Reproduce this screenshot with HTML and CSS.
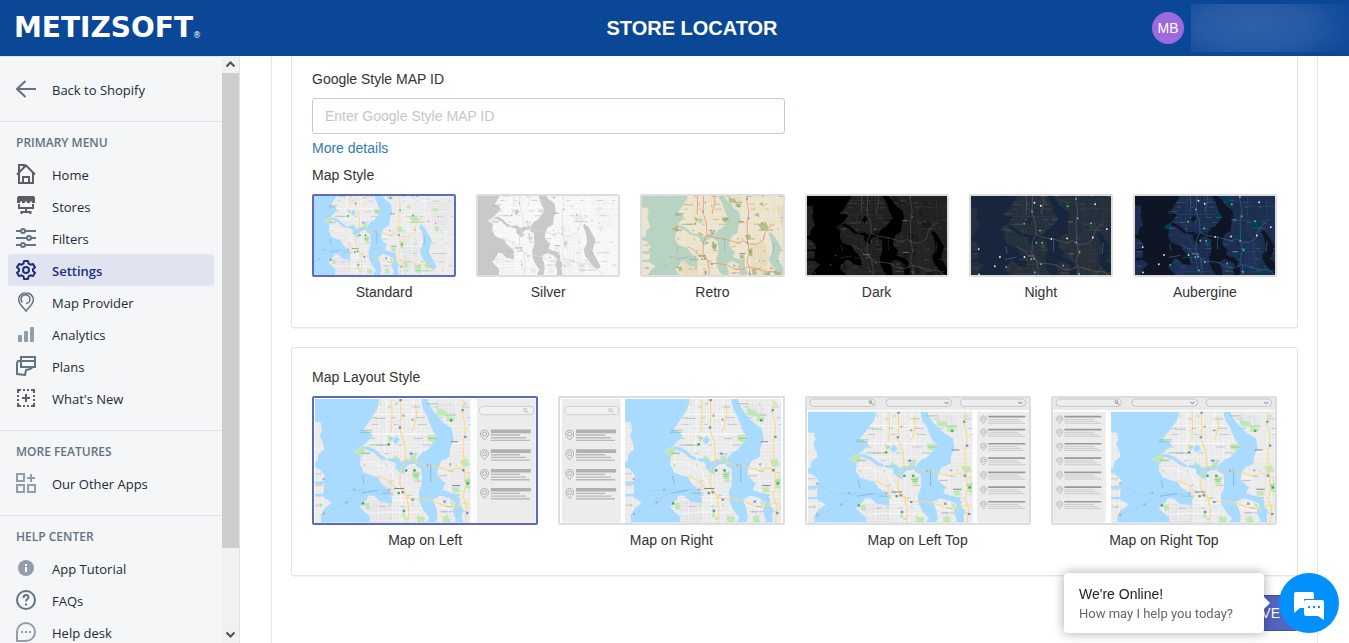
FILE: index.html
```
<!DOCTYPE html>
<html lang="en">
<head>
<meta charset="utf-8">
<meta name="viewport" content="width=device-width, initial-scale=1">
<title>Store Locator</title>
<link rel="stylesheet" href="styles.css">
</head>
<body>
<svg class="defs" aria-hidden="true">
  <defs>
    <clipPath id="land-clip">
      <path id="land" d="M20 110 62 112 66 135 60 150 68 175 72 192 55 208 52 230 20 235ZM20 238 58 252 75 272 73 288 20 292ZM20 296 72 298 70 325 20 328ZM20 335 70 335 95 352 72 372 62 390 64 411 20 411ZM240 30 236 60 225 82 208 108 190 135 206 140 218 152 192 180 160 200 183 212 180 238 192 262 218 272 234 276 244 296 268 314 274 330 277 356 262 354 240 350 224 334 208 330 196 348 180 365 192 378 210 395 208 440 385 440 378 411 388 398 370 376 358 350 356 322 366 292 363 250 346 242 350 222 366 202 380 196 398 176 410 156 398 138 388 112 380 90 370 75 364 50 366 30ZM383 30 385 52 398 76 412 92 430 114 444 122 456 132 460 165 450 190 448 216 424 228 414 250 412 270 428 288 436 292 428 314 448 322 468 326 480 342 478 360 490 372 486 392 492 440H765V30ZM398 344 420 332 444 338 466 352 458 378 466 400 464 440H402L412 392 408 368Z"/>
    </clipPath>
    <symbol id="map" viewBox="45 42 465 370" preserveAspectRatio="none" overflow="visible">
      <rect class="water" x="20" y="20" width="745" height="430"/>
      <use class="land" href="#land"/>
      <g clip-path="url(#land-clip)">
        <path class="alt" d="M205 300H280L272 440H208ZM500 260 560 250 580 300 570 380 510 420ZM610 100 720 130 700 240 650 230ZM400 40 460 60 470 100 430 95Z"/>
        <path class="street" d="M45 235H765" stroke-width="410" stroke-dasharray="1 8 1 12 2 10 1 7"/>
        <path class="street" d="M400 30V440" stroke-width="720" stroke-dasharray="1 11 1 8 2 14 1 9"/>
        <path class="park" d="M160 200 190 182 196 196 184 214ZM214 50 232 72 212 96ZM262 150 278 158 270 172ZM382 152 410 150 402 174 384 166ZM330 215 350 206 346 232 334 228ZM282 212 300 222 290 238 276 228ZM410 70 438 78 442 92 412 90ZM440 94 464 98 458 110 440 108ZM480 226 500 222 508 240 488 246ZM456 308 474 306 478 320 460 322ZM340 260H360L354 286 340 280ZM192 356 206 352 210 370 198 374ZM350 392 374 396 372 411H352ZM304 372H314V396H302ZM450 348 462 352 458 366ZM494 284 510 278V312L498 308ZM536 182 568 170 580 196 552 206ZM660 52 704 46 724 66 690 84 662 80ZM540 96 554 90 560 108ZM516 140 538 134 540 150ZM636 150 660 146 656 168ZM600 374 632 358 640 386 610 392ZM560 384 590 372 584 410 566 406ZM644 226 668 222 660 248ZM428 396 444 390 450 411H430ZM508 366 524 360 530 384 514 388Z"/>
        <path class="park" d="M60 360H600M170 56H700M190 240H690M470 330H760M200 400H740" stroke-width="8" stroke-dasharray="7 63 4 41 9 82"/>
        <path class="water" d="M277 168 288 152 300 164 288 178ZM192 184 205 184 226 194 246 212 262 220 290 220 302 230 320 224 346 222 350 236 326 238 312 250 314 268 300 262 286 248 288 232 266 228 242 222 222 204 192 190ZM586 212 604 226 622 255 636 278 626 306 622 325 642 358 658 386 644 396 632 388 612 370 590 343 583 316 596 296 598 276 590 242 580 220Z"/>
        <g class="minor">
          <path d="M260 42 261 130 252 182 262 230 285 282 302 318 306 440M340 42 334 110 350 160M190 232 220 230 260 250M205 342 330 346M210 88H372M206 148H380M440 180 492 172 560 176 700 160M412 260 450 262M520 42V210L548 250V410M600 42 604 180M500 112 620 116 730 92M508 300H590M400 360 450 372M655 250 700 268 765 262M356 380 320 384 264 380 214 388M640 200 690 230 710 330 690 430"/>
        </g>
      </g>
      <g class="road">
        <path d="M300 30 302 90 299 132 314 176 317 222 301 252 299 300 318 326 326 372 322 440"/>
        <path d="M275 30 276 92 274 140"/>
        <path d="M346 56 350 90 338 138"/>
        <path d="M317 222 346 234 396 242 448 256 474 248 496 262 530 262 558 244 566 214 584 190 606 180"/>
        <path d="M301 312 330 340 372 342 404 348 430 362 462 368 492 354 520 360 560 372 610 376 650 402 690 440"/>
        <path d="M490 30 487 84 496 130 489 170 490 250 498 296 488 334 500 362 494 440"/>
        <path d="M234 272 262 286 290 312"/>
      </g>
      <path class="ferry" d="M294 312 240 316 180 314 120 318 72 282M180 316 140 352 72 386"/>
      <g class="labels">
        <path class="ink" clip-path="url(#land-clip)" d="M198 66H700M210 98H520M216 118H740M204 160H380M230 180H730M188 206H470M204 288H720M180 344H300M260 330H640M236 364H700M420 380H740" stroke-dasharray="20 44 12 61 27 38 15 72"/>
        <path class="ink" d="M45 266H66M45 300H68M45 360H66M416 272H440M444 258H462M425 380H460"/>
        <path class="green-ink" d="M182 136H218M180 142H214M226 100H256M208 180H262M183 204H210M384 160H412M380 56H414M440 90H468M336 268H356M340 274H354M244 324H280M536 204H600M662 60H710M560 400H640M640 330H700"/>
        <path class="town" d="M282 310H312M452 170H474M456 301H480"/>
        <path class="blue-ink" d="M187 272 192 296M184 324 232 316M392 238V292M604 258 600 300"/>
      </g>
      <g class="shields">
        <path d="M298 42h7v7h-7zM296 124h7v7h-7zM484 72h7v7h-7zM492 152h7v7h-7zM334 340h7v7h-7zM308 374h7v7h-7zM430 346h7v7h-7zM486 252h7v7h-7zM498 380h7v7h-7zM304 318h7v7h-7zM330 202h7v7h-7z"/>
      </g>
      <g class="pois">
        <circle cx="266" cy="178" r="4"/><circle cx="318" cy="256" r="4"/><circle cx="343" cy="256" r="4"/><circle cx="296" cy="324" r="4"/><circle cx="189" cy="355" r="4"/><circle cx="453" cy="106" r="4"/><circle cx="503" cy="295" r="4"/><circle cx="552" cy="176" r="4"/>
      </g>
      <g class="dots">
        <circle cx="71" cy="282" r="4"/><circle cx="72" cy="386" r="4"/><circle cx="140" cy="352" r="4"/><circle cx="162" cy="314" r="4"/><circle cx="267" cy="314" r="4"/><circle cx="310" cy="92" r="4"/><circle cx="337" cy="104" r="4"/><circle cx="382" cy="240" r="4"/><circle cx="450" cy="238" r="4"/><circle cx="570" cy="98" r="4"/><circle cx="620" cy="200" r="4"/><circle cx="652" cy="208" r="4"/><circle cx="560" cy="234" r="4"/>
      </g>
    </symbol>
    <symbol id="pin" viewBox="0 0 28 34">
      <path d="M14 2C7 2 2 7 2 14c0 7 7 11 12 18 5-7 12-11 12-18C26 7 21 2 14 2Z" fill="none" stroke="#a2a2a2" stroke-width="2.500"/>
      <circle cx="14" cy="14" r="6" fill="none" stroke="#a2a2a2" stroke-width="2.500"/>
    </symbol>
    <symbol id="result" viewBox="0 0 154 38" overflow="visible">
      <use href="#pin" width="28" height="34"/>
      <path d="M33 6H153" stroke="#b0b0b0" stroke-width="11"/>
      <path d="M33 17H120M33 25H138M33 33H150" stroke="#b8b8b8" stroke-width="4"/>
    </symbol>
    <symbol id="result-small" viewBox="0 0 140 28" overflow="visible">
      <use href="#pin" width="22" height="26"/>
      <path d="M25 4H136" stroke="#999" stroke-width="5"/>
      <path d="M25 12H115M25 18H124M25 24H136" stroke="#bbb" stroke-width="2"/>
    </symbol>
    <symbol id="results" viewBox="0 0 180 375" overflow="visible">
      <rect y="3" width="176" height="370" fill="#ececec"/>
      <rect x="8" y="25" width="162" height="25" rx="12" fill="#f1f1f1" stroke="#bbb" stroke-width="2"/>
      <circle cx="145" cy="36" r="5" fill="none" stroke="#aaa" stroke-width="2"/><path d="m149 40 6 5" stroke="#aaa" stroke-width="2"/>
      <use href="#result" x="9" y="94" width="154" height="38"/><use href="#result" x="9" y="153" width="154" height="38"/><use href="#result" x="9" y="212" width="154" height="38"/><use href="#result" x="9" y="269" width="154" height="38"/>
    </symbol>
    <symbol id="results-small" viewBox="0 0 160 332" overflow="visible">
      <rect width="158" height="332" fill="#ececec"/>
      <use href="#result-small" x="9" y="11" width="140" height="28"/><use href="#result-small" x="9" y="50" width="140" height="28"/><use href="#result-small" x="9" y="92" width="140" height="28"/><use href="#result-small" x="9" y="135" width="140" height="28"/><use href="#result-small" x="9" y="178" width="140" height="28"/><use href="#result-small" x="9" y="222" width="140" height="28"/><use href="#result-small" x="9" y="266" width="140" height="28"/>
    </symbol>
    <symbol id="filters-bar" viewBox="0 0 666 36">
      <rect width="666" height="36" fill="#e9e9e9"/>
      <g fill="#eee" stroke="#b2b2b2" stroke-width="2"><rect x="9" y="3" width="196" height="22" rx="11"/><rect x="237" y="3" width="196" height="22" rx="11"/><rect x="459" y="3" width="196" height="22" rx="11"/></g>
      <g fill="none" stroke="#999" stroke-width="3"><circle cx="190" cy="12" r="4"/><path d="m193 15 6 6M412 12l6 5 6-5M633 12l6 5 6-5"/></g>
    </symbol>
  </defs>
</svg>

<header class="topbar">
  <div class="brand">METIZSOFT<span class="registered">®</span></div>
  <h1 class="title">STORE LOCATOR</h1>
  <div class="account"><span class="avatar">MB</span><span class="account-name"></span></div>
</header>

<div class="shell">
  <aside class="sidebar">
    <nav class="nav">
      <div class="nav-group back">
        <a class="nav-item" href="#"><svg class="icon" viewBox="0 0 20 20"><path d="M20 10H1M9.500 2 1 10l8.500 8" class="line"/></svg><span>Back to Shopify</span></a>
      </div>
      <div class="nav-group">
        <h2 class="nav-heading">PRIMARY MENU</h2>
        <a class="nav-item" href="#"><svg class="icon dark" viewBox="0 0 20 20"><path class="line" d="M1 10.500 10 1.500l9 9M3 9v10h14V9M3 8.500V1h5v2M7 19v-6h6v6"/></svg><span>Home</span></a>
        <a class="nav-item" href="#"><svg class="icon dark" viewBox="0 0 20 20"><path class="solid" d="M2 0h16l1 2v5h-3V5.500h-2V7h-3V5.500H9V7H6V5.500H4V7H1V2Z"/><path class="line" d="M3 8v4h14V8M10 12v4M5.500 18v-2h9v2"/></svg><span>Stores</span></a>
        <a class="nav-item" href="#"><svg class="icon" viewBox="0 0 20 20"><path class="line" d="M0 3h5M9 3h11M0 10h11M15 10h5M0 17h5M9 17h11"/><circle class="line" cx="7" cy="3" r="2"/><circle class="line" cx="13" cy="10" r="2"/><circle class="line" cx="7" cy="17" r="2"/></svg><span>Filters</span></a>
        <a class="nav-item active" href="#" aria-current="page"><svg class="icon" viewBox="0 0 20 20"><path class="line" stroke-linejoin="round" d="M8 1h4l.6 2.700 1.800 1L17 3.900l2 3.400-2 1.800v1.800l2 1.800-2 3.400-2.600-.8-1.800 1L12 19H8l-.6-2.700-1.800-1-2.600.8-2-3.400 2-1.800V9.100L1 7.300l2-3.400 2.600.8 1.800-1Z"/><circle class="line" cx="10" cy="10" r="3"/></svg><span>Settings</span></a>
        <a class="nav-item" href="#"><svg class="icon" viewBox="0 0 20 20"><path class="thin" d="M10 .8c-4.200 0-7.300 3.100-7.300 7 0 4.700 4.600 7.200 7.300 11.400 2.700-4.200 7.300-6.700 7.300-11.400 0-3.900-3.100-7-7.300-7Z"/><path class="thin" d="M6.500 10.500a4.500 4.500 0 1 1 7.500-3M14 7.500a4 4 0 0 1-4 4"/></svg><span>Map Provider</span></a>
        <a class="nav-item" href="#"><svg class="icon light" viewBox="0 0 20 20"><g class="solid"><rect x="2" y="11" width="4" height="7" rx="1"/><rect x="8" y="7" width="4" height="11" rx="1"/><rect x="14" y="3" width="4" height="15" rx="1"/></g></svg><span>Analytics</span></a>
        <a class="nav-item" href="#"><svg class="icon" viewBox="0 0 20 20"><path class="line" d="M5 1h14v10H5ZM5 5h14M5 5H2L1 7v11l8 1 1-5 4-1 3-2"/></svg><span>Plans</span></a>
        <a class="nav-item" href="#"><svg class="icon dark" viewBox="0 0 20 20"><path class="line" d="M2 5V2h3M15 2h3v3M18 15v3h-3M5 18H2v-3M7 2h2M11 2h2M7 18h2M11 18h2M2 7v2M2 11v2M18 7v2M18 11v2M10 6v8M6 10h8"/></svg><span>What's New</span></a>
      </div>
      <div class="nav-group">
        <h2 class="nav-heading">MORE FEATURES</h2>
        <a class="nav-item" href="#"><svg class="icon light" viewBox="0 0 20 20"><path class="line" d="M1 1h7v7H1ZM1 12h7v7H1ZM12 12h7v7h-7ZM15 1v8M11 5h8"/></svg><span>Our Other Apps</span></a>
      </div>
      <div class="nav-group">
        <h2 class="nav-heading">HELP CENTER</h2>
        <a class="nav-item" href="#"><svg class="icon light" viewBox="0 0 20 20"><circle class="solid" cx="10" cy="10" r="8"/><path d="M9 6h2v2H9ZM9 9h2v5H9Z" fill="#fff"/></svg><span>App Tutorial</span></a>
        <a class="nav-item" href="#"><svg class="icon" viewBox="0 0 20 20"><circle class="line" cx="10" cy="10" r="9"/><path class="line" d="M7.500 8c0-4 5-3.500 5-.8 0 2-2.500 1.800-2.500 4.300M10 13.500v2"/></svg><span>FAQs</span></a>
        <a class="nav-item" href="#"><svg class="icon light" viewBox="0 0 20 20"><path class="line" d="M1 19V10a9 9 0 1 1 9 9Z"/><path class="solid" d="M5 9h2v2H5ZM9 9h2v2H9ZM13 9h2v2h-2Z"/></svg><span>Help desk</span></a>
      </div>
    </nav>
    <div class="scrollbar" aria-hidden="true">
      <svg class="scroll-arrow" viewBox="0 0 17 17"><path d="m4.500 10.500 4-4 4 4"/></svg>
      <div class="scroll-thumb"></div>
      <div class="scroll-rest"></div>
      <svg class="scroll-arrow" viewBox="0 0 17 17"><path d="m4.500 6.500 4 4 4-4"/></svg>
    </div>
  </aside>

  <main class="content">
    <form class="panel">
      <section class="card card-continued">
        <div class="field">
          <label for="map-id">Google Style MAP ID</label>
          <input id="map-id" class="text-input" type="text" placeholder="Enter Google Style MAP ID">
          <a class="more" href="#">More details</a>
        </div>
        <fieldset class="choices">
          <legend>Map Style</legend>
          <div class="grid styles">
            <label class="choice"><input type="radio" name="style" checked><svg class="thumb map-standard" viewBox="0 0 420 237"><use href="#map" x="-48" y="-41" width="316" height="274"/></svg><span>Standard</span></label>
            <label class="choice"><input type="radio" name="style"><svg class="thumb map-silver" viewBox="0 0 420 237"><use href="#map" x="-49" y="-43" width="316" height="274"/></svg><span>Silver</span></label>
            <label class="choice"><input type="radio" name="style"><svg class="thumb map-retro" viewBox="0 0 420 237"><use href="#map" x="5" y="-16" width="325" height="270"/></svg><span>Retro</span></label>
            <label class="choice"><input type="radio" name="style"><svg class="thumb map-dark" viewBox="0 0 420 237"><use href="#map" x="5" y="-20" width="320" height="270"/></svg><span>Dark</span></label>
            <label class="choice"><input type="radio" name="style"><svg class="thumb map-night" viewBox="0 0 420 237"><use href="#map" x="5" y="-16" width="325" height="270"/></svg><span>Night</span></label>
            <label class="choice"><input type="radio" name="style"><svg class="thumb map-aubergine" viewBox="0 0 420 237"><use href="#map" x="5" y="-22" width="325" height="270"/></svg><span>Aubergine</span></label>
          </div>
        </fieldset>
      </section>

      <section class="card">
        <fieldset class="choices">
          <legend>Map Layout Style</legend>
          <div class="grid layouts">
            <label class="choice"><input type="radio" name="layout" checked>
              <svg class="thumb map-standard" viewBox="0 0 666 375"><rect width="666" height="375" fill="#fff"/><svg x="3" y="3" width="465" height="370"><use href="#map" width="465" height="370"/></svg><use href="#results" x="488" width="180" height="375"/></svg><span>Map on Left</span></label>
            <label class="choice"><input type="radio" name="layout">
              <svg class="thumb map-standard" viewBox="0 0 666 375"><rect width="666" height="375" fill="#fff"/><svg x="195" y="3" width="466" height="370"><use href="#map" width="465" height="370"/></svg><use href="#results" x="6" width="180" height="375"/></svg><span>Map on Right</span></label>
            <label class="choice"><input type="radio" name="layout">
              <svg class="thumb map-standard" viewBox="0 0 666 375"><rect width="666" height="375" fill="#fff"/><svg x="3" y="41" width="492" height="332"><use href="#map" width="492" height="332"/></svg><use href="#filters-bar" width="666" height="36"/><use href="#results-small" x="509" y="41" width="160" height="332"/></svg><span>Map on Left Top</span></label>
            <label class="choice"><input type="radio" name="layout">
              <svg class="thumb map-standard" viewBox="0 0 666 375"><rect width="666" height="375" fill="#fff"/><svg x="174" y="41" width="492" height="332"><use href="#map" width="492" height="332"/></svg><use href="#filters-bar" width="666" height="36"/><use href="#results-small" x="0" y="41" width="160" height="332"/></svg><span>Map on Right Top</span></label>
          </div>
        </fieldset>
      </section>
      <div class="actions"><button class="save" type="button">SAVE</button></div>
    </form>
  </main>
</div>

<div class="chat">
  <div class="chat-bubble"><strong>We're Online!</strong><span>How may I help you today?</span></div>
  <button class="chat-button" type="button" aria-label="Open chat"><svg viewBox="0 0 60 60"><path d="M17 19h16q2 0 2 2v5H25v9h-4l-6 5V21q0-2 2-2Z" fill="#fff"/><path d="M27 27h16q2 0 2 2v18l-6-4H27q-2 0-2-2V29q0-2 2-2Z" fill="#fff"/><path d="M29 33h2v2h-2ZM34 33h2v2h-2ZM39 33h2v2h-2Z" fill="#0091ff"/></svg></button>
</div>
</body>
</html>
```

FILE: styles.css
```
* { box-sizing: border-box; }

body {
  margin: 0;
  height: 100vh;
  display: flex;
  flex-direction: column;
  overflow: hidden;
  background: #fff;
  color: #333;
  font: 14px/20px "Liberation Sans", Arial, sans-serif;
}

a { text-decoration: none; }
.defs { position: absolute; width: 0; height: 0; }

/* Top bar */
.topbar {
  flex: none;
  height: 56px;
  display: flex;
  align-items: center;
  background: #0b4797;
  color: #fff;
}
.brand {
  width: 240px;
  padding-left: 14px;
  display: flex;
  align-items: flex-end;
  font: bold 28px/32px "DejaVu Sans", sans-serif;
}
.registered { font: 8px/16px "DejaVu Sans", sans-serif; }
.title {
  flex: 1;
  margin: 0;
  text-align: center;
  font-size: 20px;
  line-height: 24px;
}
.account {
  width: 205px;
  padding-left: 8px;
  display: flex;
  align-items: center;
  gap: 7px;
}
.avatar {
  width: 32px;
  height: 32px;
  border-radius: 50%;
  background: #9c6ade;
  text-align: center;
  line-height: 32px;
}
.account-name {
  flex: 1;
  height: 48px;
  background: radial-gradient(ellipse 100px 44px at 40% 45%, #2f60a8 0, #285ba5 50%, #0b479700 100%), #104a99;
}

.shell { flex: 1; min-height: 0; display: flex; }

/* Sidebar */
.sidebar {
  flex: none;
  width: 240px;
  display: flex;
  border-right: 1px solid #dfe3e8;
  background: #f4f6f8;
}
.nav {
  flex: 1;
  overflow: hidden;
  border-top: 1px solid #dfe3e8;
  font-family: "Open Sans", "Noto Sans", sans-serif;
  font-size: 13px;
}
.nav-group { padding: 11px 8px 16px; border-bottom: 1px solid #dfe3e8; }
.nav-group:last-child { border-bottom: 0; }
.back { padding: 16px 8px; }
.nav-heading {
  margin: 0 0 5px 8px;
  color: #637381;
  font-size: 12px;
  font-weight: 600;
  line-height: 20px;
}
.nav-item {
  height: 32px;
  padding: 0 8px;
  display: flex;
  align-items: center;
  gap: 16px;
  border-radius: 3px;
  color: #212b36;
}
.nav-item span { padding-top: 2px; }
.nav-item.active { background: #e0e4f1; color: #202e78; font-weight: 600; }
.icon { width: 20px; height: 20px; color: #637381; }
.icon.dark { color: #5c5f62; }
.icon.light { color: #919eab; }
.active .icon { color: #202e78; }
.line { fill: none; stroke: currentColor; stroke-width: 2; }
.thin { fill: none; stroke: currentColor; stroke-width: 1.500; }
.solid { fill: currentColor; }

.scrollbar {
  width: 17px;
  display: flex;
  flex-direction: column;
  background: #f1f1f1;
}
.scroll-arrow { flex: none; width: 17px; height: 17px; fill: none; stroke: #505050; stroke-width: 2; }
.scroll-thumb { flex: 475; background: #cdcdcd; }
.scroll-rest { flex: 78; }

/* Settings panel */
.content { flex: 1; min-width: 0; padding: 0 31px; }
.panel {
  min-height: 100%;
  padding: 0 19px;
  border: solid #e6e6e6;
  border-width: 0 1px;
}
.card {
  margin-bottom: 19px;
  padding: 19px 20px 25px;
  border: 1px solid #e3e3e3;
  border-radius: 3px;
  box-shadow: 0 1px 1px #0000000d;
}
.card-continued { padding-top: 13px; border-top: 0; border-radius: 0 0 3px 3px; }
.field { width: calc(50% - 10px); display: flex; flex-direction: column; }
.text-input {
  height: 36px;
  margin: 9px 0 4px;
  padding: 0 12px;
  border: 1px solid #c4cdd5;
  border-radius: 3px;
  font: inherit;
}
.text-input::placeholder { color: #c4c6ca; }
.more { align-self: flex-start; color: #337ab7; }
.choices { margin: 0; padding: 0; border: 0; min-width: 0; }
.choices legend { padding: 0; margin-bottom: 9px; }
.field + .choices { margin-top: 7px; }
.grid { display: grid; gap: 20px; }
.styles { grid-template-columns: repeat(6, 1fr); }
.layouts { grid-template-columns: repeat(4, 1fr); }
.choice { position: relative; display: flex; flex-direction: column; gap: 5px; text-align: center; }
.choice input { position: absolute; margin: 0; opacity: 0; }
.thumb { width: 100%; display: block; border: 2px solid #ddd; border-radius: 2px; }
.choice input:checked + .thumb { border-color: #5c6ac4; }

.actions { display: flex; justify-content: flex-end; }
.save {
  height: 36px;
  padding: 0 17px;
  border: 1px solid #3f4eae;
  border-radius: 3px;
  background: #5563c1;
  color: #fff;
  font: inherit;
}

/* Map artwork */
.map-standard {
  --water: #a9daff; --land: #e9e9e9; --alt: #e3e3e6; --street: #f5f5f5; --park: #c0e8b4;
  --road: #fbd978; --minor: #fff; --ink: #a9b2be; --green: #7dbd8c; --town: #888;
  --ferry: #91bfe6; --shield: #6d93d4; --poi: #46a75c; --dot: #b4b4b4;
}
.map-silver {
  --water: #c9c9c9; --land: #f5f5f5; --alt: #f0f0f0; --street: #fff; --park: #eaeaea;
  --road: #dadada; --minor: #fff; --ink: #b0b0b0; --green: #b0b0b0; --town: #999;
  --ferry: #bbb; --shield: #c5c5c5; --poi: #bbb; --dot: #d5d5d5;
}
.map-retro {
  --water: #b9d3c2; --land: #ebe3cd; --alt: #e4d9bc; --street: #f2ecdd; --park: #b5bd8a;
  --road: #e98d58; --minor: #f8d98d; --ink: #a0917c; --green: #67905d; --town: #66584a;
  --ferry: #a2bdb0; --shield: #6799c9; --poi: #67b567; --dot: #bcb9a9;
}
.map-dark {
  --water: #000; --land: #202020; --alt: #242424; --street: #2a2a2a; --park: #181818;
  --road: #4e4e4e; --minor: #373737; --ink: #5a5a5a; --green: #505050; --town: #888;
  --ferry: #222; --shield: #555; --poi: #444; --dot: #353535;
}
.map-night {
  --water: #17263c; --land: #242f3e; --alt: #2a3039; --street: #2c3640; --park: #263c3f;
  --road: #625a4d; --minor: #3b4248; --ink: #66584a; --green: #456d57; --town: #a87850;
  --ferry: #26364d; --shield: #73a5e8; --poi: #63c768; --dot: #f0f0f0;
}
.map-aubergine {
  --water: #0e1626; --land: #1d2c4d; --alt: #1f3059; --street: #263a64; --park: #023e58;
  --road: #35627f; --minor: #2a5566; --ink: #507782; --green: #3b7469; --town: #8fb0ab;
  --ferry: #16233a; --shield: #77a6dc; --poi: #62c96d; --dot: #e7edf4;
}
.water { fill: var(--water); }
.land { fill: var(--land); }
.alt { fill: var(--alt); }
.street { fill: none; stroke: var(--street); }
.park { fill: var(--park); stroke: var(--park); }
.minor { fill: none; stroke: var(--minor); stroke-width: 2; }
.road { fill: none; stroke: var(--road); stroke-width: 3; stroke-linejoin: round; }
.ferry { fill: none; stroke: var(--ferry); stroke-width: 1; stroke-dasharray: 4 2; }
.labels { fill: none; stroke-width: 2; }
.ink { stroke: var(--ink); }
.green-ink { stroke: var(--green); }
.town { stroke: var(--town); stroke-width: 3; }
.blue-ink { stroke: var(--shield); stroke-dasharray: 7 2; }
.shields { fill: var(--shield); }
.pois { fill: var(--poi); }
.dots { fill: var(--dot); }

/* Chat widget floats over the page */
.chat { position: fixed; right: 10px; bottom: 10px; display: flex; gap: 15px; }
.chat-bubble {
  position: relative;
  width: 200px;
  height: 60px;
  padding: 11px 15px;
  display: flex;
  flex-direction: column;
  border-radius: 4px;
  background: #fff;
  box-shadow: 0 0 12px #00000059;
}
.chat-bubble::after {
  content: "";
  position: absolute;
  right: -4px;
  top: 25px;
  width: 10px;
  height: 10px;
  background: #fff;
  transform: rotate(45deg);
}
.chat-bubble strong { font-weight: 400; color: #222; }
.chat-bubble span { color: #666; font: 13px/20px Roboto, sans-serif; }
.chat-button {
  width: 60px;
  height: 60px;
  padding: 0;
  border: 0;
  border-radius: 50%;
  background: #0091ff;
}
.chat-button svg { display: block; }
```
